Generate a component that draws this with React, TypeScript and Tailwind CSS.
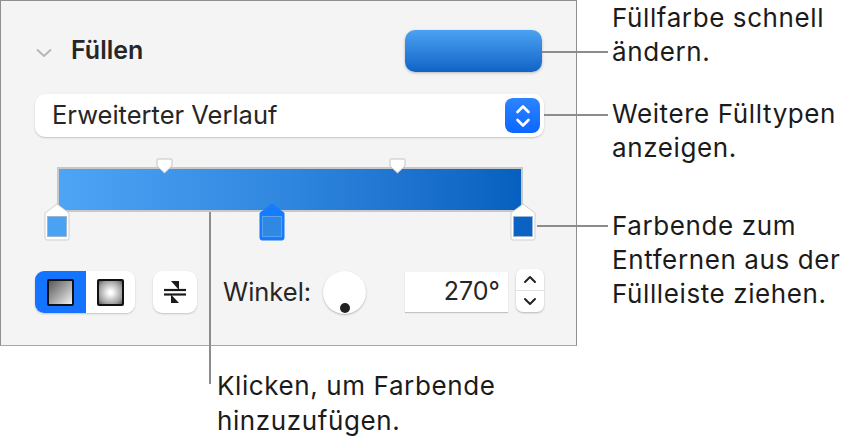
import React from 'react';

const font = { fontFamily: 'Inter, "Liberation Sans", sans-serif' };

function Chevron({ className = '' }: { className?: string }) {
  return (
    <svg width="16" height="10" viewBox="0 0 16 10" className={className}>
      <path d="M1.5 2 L8 8 L14.5 2" fill="none" stroke="#b4b4b4" strokeWidth="1.8" strokeLinecap="round" strokeLinejoin="round" />
    </svg>
  );
}

function TopMarker({ left }: { left: string }) {
  return (
    <svg width="17" height="16" viewBox="0 0 17 16" className={`absolute top-0 ${left}`}>
      <path d="M2 1 H15 Q16 1 16 2 V8 L8.5 15 L1 8 V2 Q1 1 2 1 Z" fill="#fff" stroke="#c4c4c4" strokeWidth="1" />
    </svg>
  );
}

function Stop({ left, fill, active }: { left: string; fill: string; active?: boolean }) {
  return (
    <div className={`absolute top-[45px] ${left} w-[26px] h-[38px]`}>
      <svg width="26" height="38" viewBox="0 0 26 38" className="absolute inset-0">
        <path
          d="M13 1 L25 10 V35 Q25 37 23 37 H3 Q1 37 1 35 V10 Z"
          fill={active ? '#157bff' : '#fff'}
          stroke={active ? '#157bff' : '#cfcfcf'}
          strokeWidth="1"
        />
        <rect x="3.5" y="13.5" width="19" height="20" fill={fill} stroke={active ? '#5aa2ee' : '#9ab6d6'} strokeWidth="1" />
      </svg>
    </div>
  );
}

export default function App() {
  return (
    <div className="relative w-[868px] h-[446px] bg-white text-[#1b1b1b] overflow-hidden" style={font}>
      <div className="flex">
        {/* Panel + bottom note */}
        <div className="flex flex-col">
          <div className="w-[577px] h-[346px] bg-[#f4f4f4] border border-[#8f8f8f] border-b-[#a8a8a8] pl-[34px] pt-[29px]">
            {/* Header */}
            <div className="flex items-center h-[42px] w-[507px]">
              <Chevron className="ml-[1px] mt-[4px]" />
              <span className="ml-[19px] text-[25px] font-semibold text-[#262626]">Füllen</span>
              <div className="ml-auto w-[137px] h-[42px] rounded-[10px] bg-gradient-to-b from-[#4ba2f2] to-[#0f63c6] shadow-[0_1px_3px_rgba(0,0,0,0.25)]" />
            </div>

            {/* Dropdown */}
            <div className="mt-[22px] w-[509px] h-[43px] bg-white rounded-[10px] shadow-[0_1px_2px_rgba(0,0,0,0.2)] flex items-center pl-[17px] pr-[4px]">
              <span className="text-[25.5px] text-[#262626]">Erweiterter Verlauf</span>
              <div className="ml-auto w-[35px] h-[35px] rounded-[8px] bg-gradient-to-b from-[#2c84ff] to-[#0a66ff] flex items-center justify-center">
                <svg width="16" height="26" viewBox="0 0 16 26">
                  <path d="M2.5 9 L8 3.5 L13.5 9" fill="none" stroke="#fff" strokeWidth="2.6" strokeLinecap="round" strokeLinejoin="round" />
                  <path d="M2.5 17 L8 22.5 L13.5 17" fill="none" stroke="#fff" strokeWidth="2.6" strokeLinecap="round" strokeLinejoin="round" />
                </svg>
              </div>
            </div>

            {/* Gradient bar */}
            <div className="relative mt-[21px] ml-[10px] w-[490px] h-[84px]">
              <div className="absolute left-[12px] top-[9px] w-[466px] h-[45px] border-2 border-[#c8c8c8] bg-gradient-to-r from-[#4ea4f5] via-[#2f86de] to-[#0660bf]" />
              <TopMarker left="left-[111px]" />
              <TopMarker left="left-[344px]" />
              <Stop left="left-[-1px]" fill="#4ca2f2" />
              <Stop left="left-[214px]" fill="#2f88e2" active />
              <Stop left="left-[465px]" fill="#0a62c2" />
            </div>

            {/* Bottom controls */}
            <div className="mt-[28px] flex items-center h-[44px]">
              <div className="flex h-[42px] w-[100px] rounded-[9px] overflow-hidden shadow-[0_1px_2px_rgba(0,0,0,0.2)]">
                <div className="w-[51px] bg-[#1473ff] flex items-center justify-center">
                  <div className="w-[27px] h-[27px] border-2 border-[#111] rounded-[2px] bg-gradient-to-br from-[#5a5a5a] to-[#f4f4f4]" />
                </div>
                <div className="flex-1 bg-white flex items-center justify-center">
                  <div className="w-[27px] h-[27px] border-2 border-[#111] rounded-[2px] bg-[radial-gradient(circle,#ffffff_10%,#9a9a9a_75%,#555555_100%)]" />
                </div>
              </div>
              <div className="ml-[18px] w-[44px] h-[42px] rounded-[9px] bg-white shadow-[0_1px_2px_rgba(0,0,0,0.2)] flex items-center justify-center">
                <svg width="24" height="26" viewBox="0 0 24 26">
                  <path d="M8 2 H16 L16 11 Z" fill="#1a1a1a" />
                  <path d="M1 11 H23" stroke="#1a1a1a" strokeWidth="2.2" />
                  <path d="M1 15.5 H23" stroke="#1a1a1a" strokeWidth="2.2" />
                  <path d="M8 15.5 L8 24 H16 Z" fill="#1a1a1a" />
                </svg>
              </div>
              <span className="ml-[26px] w-[88px] text-[25.5px] text-[#262626] whitespace-nowrap">Winkel:</span>
              <div className="ml-[12px] relative w-[43px] h-[43px] rounded-full bg-white shadow-[0_1px_2px_rgba(0,0,0,0.25)]">
                <div className="absolute left-[17px] top-[32px] w-[10px] h-[10px] rounded-full bg-[#222]" />
              </div>
              <div className="ml-[39px] w-[103px] h-[40px] bg-white shadow-[0_1px_1px_rgba(0,0,0,0.2)] flex items-center justify-end pr-[8px]">
                <span className="text-[25px] text-[#262626]">270°</span>
              </div>
              <div className="ml-[8px] w-[28px] h-[43px] -mt-[3px] rounded-[7px] bg-white shadow-[0_1px_2px_rgba(0,0,0,0.25)] flex flex-col">
                <div className="flex-1 flex items-center justify-center border-b border-[#e2e2e2]">
                  <svg width="14" height="9" viewBox="0 0 14 9">
                    <path d="M2 7 L7 2 L12 7" fill="none" stroke="#222" strokeWidth="2" strokeLinecap="round" strokeLinejoin="round" />
                  </svg>
                </div>
                <div className="flex-1 flex items-center justify-center">
                  <svg width="14" height="9" viewBox="0 0 14 9">
                    <path d="M2 2 L7 7 L12 2" fill="none" stroke="#222" strokeWidth="2" strokeLinecap="round" strokeLinejoin="round" />
                  </svg>
                </div>
              </div>
            </div>
          </div>

          <div className="ml-[217px] mt-[22px] text-[26px] leading-[35px] tracking-[0.6px] whitespace-nowrap">
            <div>Klicken, um Farbende</div>
            <div>hinzuzufügen.</div>
          </div>
        </div>

        {/* Right notes */}
        <div className="ml-[35px] flex flex-col text-[26px] leading-[34px] tracking-[0.6px] whitespace-nowrap">
          <div className="mt-[1px]">
            <div>Füllfarbe schnell</div>
            <div>ändern.</div>
          </div>
          <div className="mt-[28px]">
            <div>Weitere Fülltypen</div>
            <div>anzeigen.</div>
          </div>
          <div className="mt-[44px]">
            <div>Farbende zum</div>
            <div>Entfernen aus der</div>
            <div>Füllleiste ziehen.</div>
          </div>
        </div>
      </div>

      {/* Callout lines */}
      <div className="absolute left-[542px] top-[51px] w-[66px] h-[2px] bg-[#8c8c8c]" />
      <div className="absolute left-[544px] top-[114px] w-[64px] h-[2px] bg-[#8c8c8c]" />
      <div className="absolute left-[537px] top-[225px] w-[71px] h-[2px] bg-[#8c8c8c]" />
      <div className="absolute left-[209px] top-[212px] w-[2px] h-[172px] bg-[#8c8c8c]" />
    </div>
  );
}
